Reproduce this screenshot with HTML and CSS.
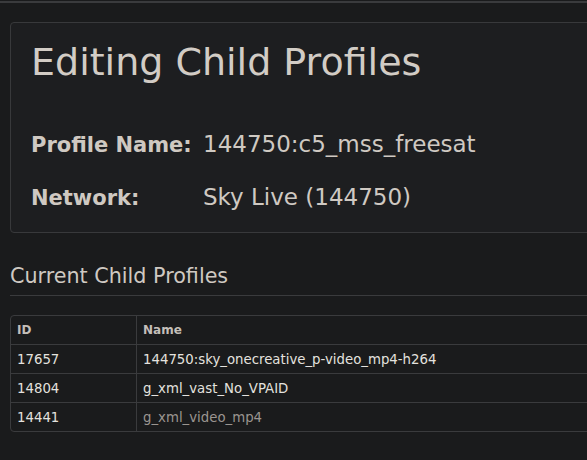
FILE: index.html
```html
<!DOCTYPE html>
<html>
<head>
<meta charset="utf-8">
<link rel="stylesheet" href="styles.css">
</head>
<body>
<div class="topline"></div>
<div class="page">
  <section class="panel">
    <h1 class="title">Editing Child Profiles</h1>
    <div class="fields">
      <div class="label">Profile Name:</div>
      <div class="value">144750:c5_mss_freesat</div>
      <div class="label">Network:</div>
      <div class="value">Sky Live (144750)</div>
    </div>
  </section>
  <h2 class="subhead">Current Child Profiles</h2>
  <table class="grid">
    <thead>
      <tr><th class="col-id">ID</th><th>Name</th></tr>
    </thead>
    <tbody>
      <tr><td>17657</td><td>144750:sky_onecreative_p-video_mp4-h264</td></tr>
      <tr><td>14804</td><td>g_xml_vast_No_VPAID</td></tr>
      <tr><td>14441</td><td class="dim">g_xml_video_mp4</td></tr>
    </tbody>
  </table>
</div>
</body>
</html>
```
FILE: styles.css
```css
html, body {
  margin: 0;
  padding: 0;
  background: #1a1b1c;
  font-family: "DejaVu Sans", sans-serif;
  overflow: hidden;
}
.topline {
  margin-top: 1px;
  height: 2px;
  background: #3a3b3d;
}
.page {
  padding: 19px 0 0 10px;
}
.panel {
  margin-right: -20px;
  background: #1d1e20;
  border: 1px solid #38393b;
  border-radius: 4px;
  height: 211px;
  box-sizing: border-box;
  padding: 17px 20px 0 20px;
}
.title {
  margin: 0;
  font-size: 38px;
  font-weight: normal;
  color: #d2ccc5;
  line-height: 44px;
}
.fields {
  margin-top: 47px;
  display: grid;
  grid-template-columns: 172px auto;
  align-items: baseline;
  row-gap: 25px;
  line-height: 27px;
  color: #cfc9c2;
}
.label {
  font-size: 21px;
  font-weight: bold;
}
.value {
  font-size: 23px;
}
.subhead {
  margin: 30px 0 0 0;
  padding-bottom: 6px;
  border-bottom: 1px solid #3a3b3d;
  font-size: 20.7px;
  font-weight: normal;
  color: #cfc9c2;
  line-height: 26px;
}
.grid {
  margin-top: 19px;
  width: calc(100% + 20px);
  border-collapse: separate;
  border-spacing: 0;
  border: 1px solid #3a3b3d;
  border-radius: 4px;
  font-size: 13.3px;
  color: #e4e2df;
}
.grid th, .grid td {
  height: 28px;
  padding: 0 6px;
  text-align: left;
  border-top: 1px solid #3a3b3d;
}
.grid th {
  border-top: none;
  font-weight: bold;
  font-size: 12px;
  color: #c4bfb9;
}
.grid th:first-child, .grid td:first-child {
  border-right: 1px solid #3a3b3d;
}
.col-id {
  width: 113px;
}
.dim {
  color: #9a9590;
}
```
